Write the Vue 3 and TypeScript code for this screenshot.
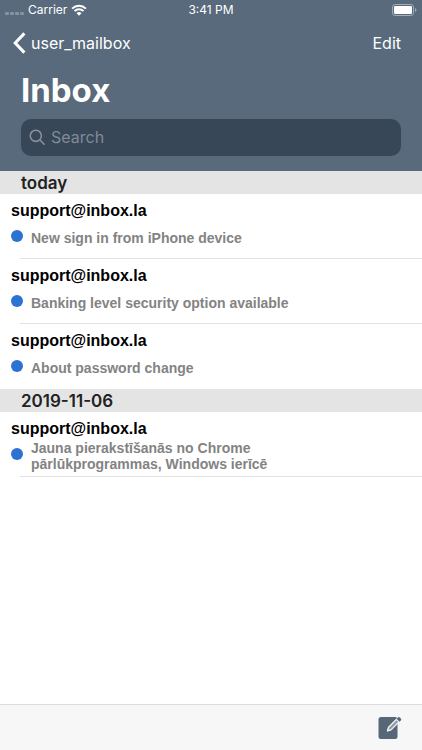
<script setup lang="ts">
import { ref } from 'vue'

interface Message {
  id: number
  sender: string
  subject: string
  unread: boolean
}

interface Section {
  label: string
  messages: Message[]
}

const query = ref('')

const sections: Section[] = [
  {
    label: 'today',
    messages: [
      { id: 1, sender: 'support@inbox.la', subject: 'New sign in from iPhone device', unread: true },
      { id: 2, sender: 'support@inbox.la', subject: 'Banking level security option available', unread: true },
      { id: 3, sender: 'support@inbox.la', subject: 'About password change', unread: true },
    ],
  },
  {
    label: '2019-11-06',
    messages: [
      {
        id: 4,
        sender: 'support@inbox.la',
        subject: 'Jauna pierakstīšanās no Chrome pārlūkprogrammas, Windows ierīcē',
        unread: true,
      },
    ],
  },
]
</script>

<template>
  <div class="screen">
    <header class="header">
      <div class="status">
        <div class="carrier">
          <span class="signal"><i v-for="n in 4" :key="n"></i></span>
          <span>Carrier</span>
          <svg class="wifi" viewBox="0 0 16 12" aria-hidden="true">
            <path d="M1.1 4.6a9.9 9.9 0 0 1 13.8 0" />
            <path d="M3.5 7.1a6.5 6.5 0 0 1 9 0" />
            <path class="solid" d="M8 11.7 5.5 9.2a3.6 3.6 0 0 1 5 0z" />
          </svg>
        </div>
        <span class="time">3:41 PM</span>
        <svg class="battery" viewBox="0 0 25 12" aria-hidden="true">
          <rect class="shell" x="0.5" y="0.5" width="21" height="11" rx="2.6" />
          <rect class="charge" x="2" y="2" width="18" height="8" rx="1.2" />
          <path class="tip" d="M23 4a2.1 2.1 0 0 1 0 4z" />
        </svg>
      </div>

      <nav class="nav">
        <a class="back" href="#mailboxes">
          <svg viewBox="0 0 13 22" aria-hidden="true"><path d="M11.4 1.4 2.2 11l9.2 9.6" /></svg>
          <span>user_mailbox</span>
        </a>
        <button class="edit" type="button">Edit</button>
      </nav>

      <h1 class="title">Inbox</h1>

      <label class="search">
        <svg viewBox="0 0 18 18" aria-hidden="true">
          <circle cx="7.2" cy="7.2" r="5.9" />
          <path d="m11.6 11.6 5 5" />
        </svg>
        <input v-model="query" type="search" placeholder="Search" aria-label="Search" />
      </label>
    </header>

    <main class="list">
      <section v-for="section in sections" :key="section.label">
        <h2 class="section-label">{{ section.label }}</h2>
        <ul class="messages">
          <li v-for="message in section.messages" :key="message.id" class="message">
            <h3 class="sender">{{ message.sender }}</h3>
            <div class="line">
              <span class="dot" :class="{ read: !message.unread }"></span>
              <p class="subject">{{ message.subject }}</p>
            </div>
          </li>
        </ul>
      </section>
    </main>

    <footer class="toolbar">
      <button class="compose" type="button" aria-label="Compose">
        <svg viewBox="0 0 24 24" aria-hidden="true">
          <rect class="page" x="0.5" y="1" width="19" height="22" rx="2.5" />
          <path class="halo" d="m9.2 15.2 1.2-4.1L19 2.4l2.9 2.9-8.6 8.7z" />
          <path class="pen" d="m10.4 14 1-2.6 7.2-7.2 1.6 1.6-7.2 7.2z" />
          <path class="cap" d="m18.6 2.8 1.3-1.3a1.4 1.4 0 0 1 2 0l.9.9a1.4 1.4 0 0 1 0 2l-1.3 1.3z" />
        </svg>
      </button>
    </footer>
  </div>
</template>

<style>
body {
  margin: 0;
  background: #fff;
}
</style>

<style scoped>
.screen {
  display: flex;
  flex-direction: column;
  min-height: 100vh;
  font-family: Inter, Roboto, sans-serif;
  color: #000;
}

.header {
  display: flex;
  flex-direction: column;
  padding-bottom: 15px;
  background: #586a7b;
  color: #fff;
}

.status {
  display: grid;
  grid-template-columns: 1fr auto 1fr;
  align-items: center;
  height: 20px;
  padding: 0 5px;
  font-size: 12px;
  line-height: 20px;
}

.carrier {
  display: flex;
  align-items: center;
  gap: 4px;
}

.signal {
  display: flex;
  gap: 1px;
  padding-top: 7px;
}

.signal i {
  width: 4px;
  height: 3px;
  border-radius: 1px;
  background: #8494a1;
}

.wifi {
  width: 16px;
  height: 12px;
  fill: none;
  stroke: #fff;
  stroke-width: 2;
}

.wifi .solid {
  fill: #fff;
  stroke: none;
}

.battery {
  justify-self: end;
  width: 25px;
  height: 12px;
}

.shell {
  fill: none;
  stroke: #a3adb7;
}

.charge {
  fill: #fff;
}

.tip {
  fill: #a3adb7;
}

.nav {
  display: flex;
  align-items: center;
  justify-content: space-between;
  height: 46px;
  padding: 0 21px 0 13px;
  font-size: 16px;
}

.back {
  display: flex;
  align-items: center;
  gap: 5px;
  color: inherit;
  text-decoration: none;
}

.back svg {
  width: 13px;
  height: 22px;
  fill: none;
  stroke: #fff;
  stroke-width: 3;
}

.edit {
  padding: 0;
  border: 0;
  background: none;
  color: inherit;
  font: inherit;
}

.title {
  margin: 4px 21px 8px;
  font-size: 33px;
  font-weight: 700;
  line-height: 41px;
}

.search {
  display: flex;
  align-items: center;
  gap: 5px;
  height: 37px;
  margin: 0 21px;
  padding: 0 8px 1px;
  box-sizing: border-box;
  border-radius: 10px;
  background: #374757;
}

.search svg {
  flex: none;
  width: 17px;
  height: 17px;
  fill: none;
  stroke: #8a939e;
  stroke-width: 1.6;
}

.search input {
  flex: 1;
  min-width: 0;
  padding: 0;
  border: 0;
  outline: 0;
  background: none;
  color: #fff;
  font: inherit;
  font-size: 16px;
  appearance: none;
}

.search input::placeholder {
  color: #818b96;
  opacity: 1;
}

.list {
  flex: 1;
}

.section-label {
  margin: 0;
  padding: 1px 21px 0;
  background: #e4e4e4;
  color: #222;
  font-size: 17px;
  font-weight: 600;
  line-height: 22px;
}

.messages {
  margin: 0;
  padding: 0;
  list-style: none;
  font-family: "Liberation Sans", Arial, sans-serif;
}

.message {
  position: relative;
  display: flex;
  flex-direction: column;
  min-height: 65px;
  padding: 7px 10px 4px 11px;
  box-sizing: border-box;
}

.message::after {
  content: "";
  position: absolute;
  right: 0;
  bottom: 0;
  left: 20px;
  height: 1px;
  background: #e3e3e3;
}

section:not(:last-child) .message:last-child::after {
  display: none;
}

.sender {
  margin: 0;
  font-size: 16px;
  font-weight: 700;
  line-height: 20px;
}

.line {
  display: flex;
  flex: 1;
  align-items: center;
  gap: 8px;
}

.dot {
  flex: none;
  width: 12px;
  height: 12px;
  margin-bottom: 4px;
  border-radius: 50%;
  background: #2c72d2;
}

.dot.read {
  visibility: hidden;
}

.subject {
  max-width: 270px;
  margin: 0;
  color: #838383;
  font-size: 14px;
  font-weight: 700;
  line-height: 16px;
}

.toolbar {
  display: flex;
  align-items: center;
  justify-content: flex-end;
  height: 45px;
  padding: 0 20px;
  border-top: 1px solid #dcdcdc;
  background: #f7f7f7;
}

.compose {
  display: flex;
  padding: 0;
  border: 0;
  background: none;
}

.compose svg {
  width: 24px;
  height: 24px;
}

.page,
.cap {
  fill: #566778;
}

.halo {
  fill: #f7f7f7;
  stroke: #f7f7f7;
  stroke-width: 1;
}

.pen {
  fill: #8d99a5;
}
</style>
